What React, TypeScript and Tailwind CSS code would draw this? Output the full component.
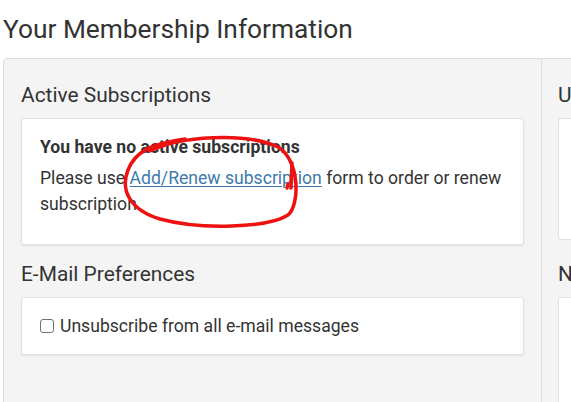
import React from "react";

export default function App() {
  return (
    <div
      className="w-[571px] h-[402px] overflow-hidden bg-white text-[#333]"
      style={{ fontFamily: "Roboto, 'Liberation Sans', sans-serif" }}
    >
      <h1 className="pl-[3px] pt-[13px] text-[26.3px] leading-[32px] font-normal">
        Your Membership Information
      </h1>
      <div className="ml-[3px] mt-[13px] flex h-[400px]">
        <div className="w-[539px] shrink-0 rounded-tl-[4px] border border-[#ddd] bg-[#f4f4f4] px-[17px] pt-[22px]">
          <h2 className="text-[20.9px] leading-[28px] font-normal">Active Subscriptions</h2>
          <div className="relative mt-[9px] h-[127px] rounded-[3px] border border-[#e2e2e2] bg-white px-[18px] pt-[15px] shadow-[0_1px_2px_rgba(0,0,0,0.08)]">
            <p className="text-[17.6px] leading-[26px] font-bold">You have no active subscriptions</p>
            <p className="mt-[5px] text-[17.6px] leading-[26px]">
              Please use{" "}
              <a href="#" className="text-[#3d7aab] underline underline-offset-[2px] decoration-1">
                Add/Renew subscription
              </a>{" "}
              form to order or renew subscription.
            </p>
            <svg
              className="pointer-events-none absolute left-[-22px] top-[-119px]"
              width="320"
              height="260"
              viewBox="0 0 320 260"
            >
              <g fill="none" stroke="#ee1111" strokeWidth="3.5" strokeLinecap="round" strokeLinejoin="round">
                <path d="M 150 151 C 180 136, 245 132, 278 147 C 300 160, 300 205, 288 215 C 268 228, 200 230, 160 219 C 130 210, 120 190, 128 170 C 135 152, 150 144, 185 139" />
                <path d="M 292 163 L 291 188" />
                <path d="M 288 184 L 287 188" />
              </g>
            </svg>
          </div>
          <h2 className="mt-[15px] text-[20.9px] leading-[28px] font-normal">E-Mail Preferences</h2>
          <div className="mt-[9px] flex h-[58px] items-center rounded-[3px] border border-[#e2e2e2] bg-white px-[18px] shadow-[0_1px_2px_rgba(0,0,0,0.08)]">
            <span className="mr-[6px] inline-block h-[14px] w-[14px] rounded-[3px] border border-[#6f6f6f] bg-white" />
            <span className="text-[17.6px] leading-[24px]">Unsubscribe from all e-mail messages</span>
          </div>
        </div>
        <div className="flex-1 border-t border-[#ddd] bg-[#f4f4f4] pl-[16px] pt-[22px]">
          <h2 className="text-[20.9px] leading-[28px] font-normal whitespace-nowrap">Upcoming</h2>
          <div className="mt-[9px] h-[122px] rounded-l-[3px] border border-r-0 border-[#e2e2e2] bg-white" />
          <h2 className="mt-[20px] text-[20.9px] leading-[28px] font-normal whitespace-nowrap">News</h2>
          <div className="mt-[9px] h-[200px] rounded-l-[3px] border border-r-0 border-[#e2e2e2] bg-white" />
        </div>
      </div>
    </div>
  );
}
